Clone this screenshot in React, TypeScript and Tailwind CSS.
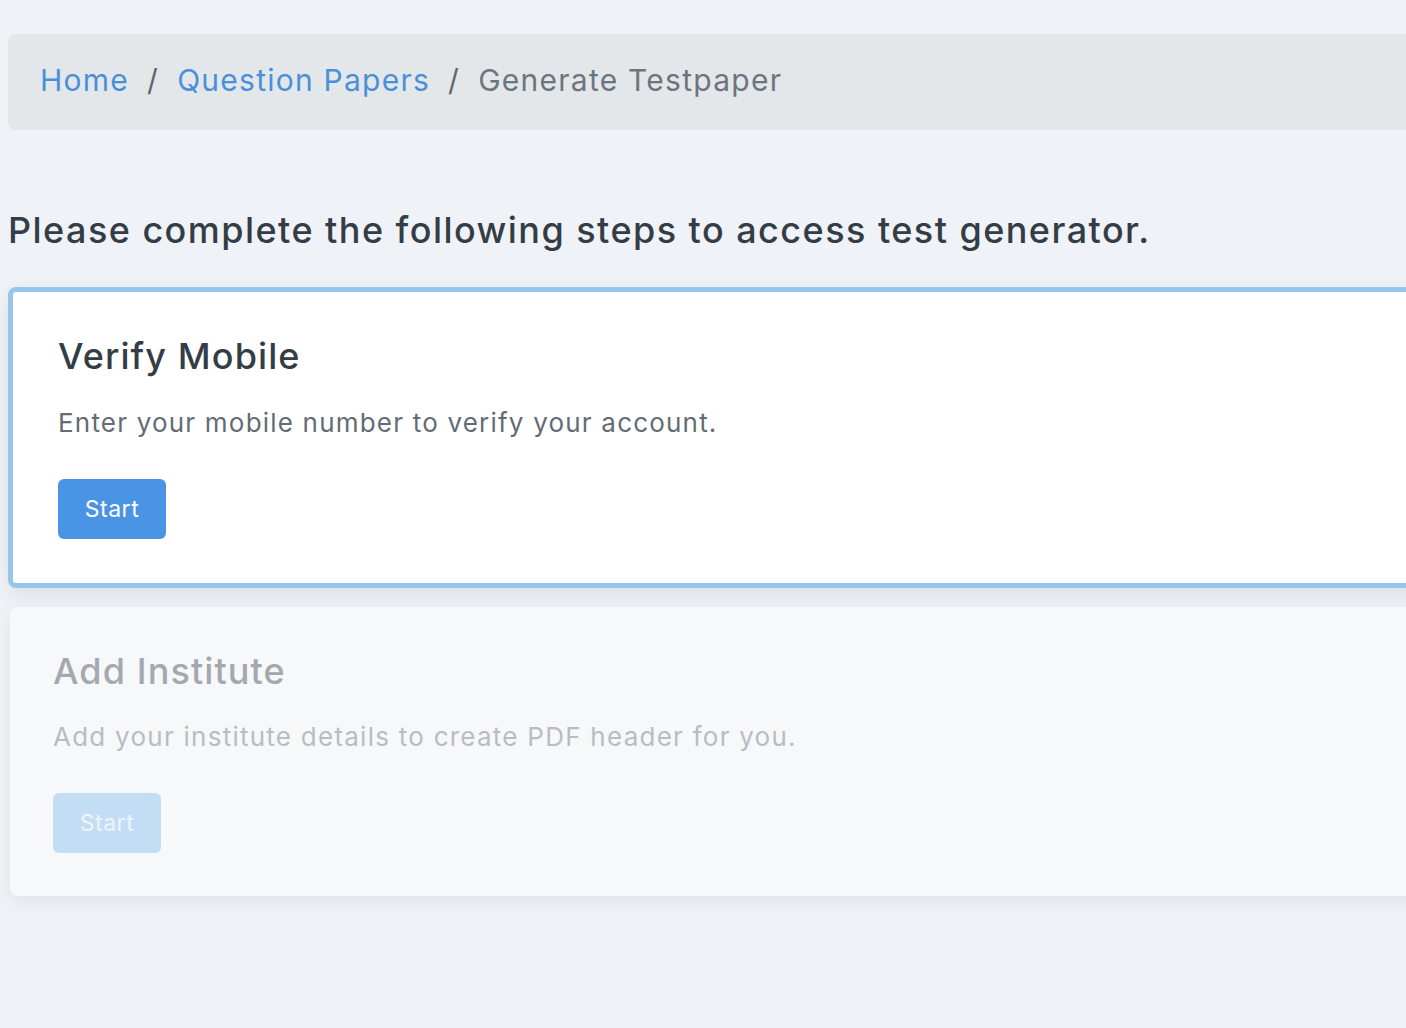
import React from 'react';

const font = { fontFamily: 'Inter, "Noto Sans", sans-serif' };

type StepProps = {
  title: string;
  text: string;
  active?: boolean;
};

const StepCard = ({ title, text, active }: StepProps) => {
  if (active) {
    return (
      <div className="ml-[8px] rounded-[8px] border-[5px] border-[#95c6ec] bg-white pl-[45px] pt-[42px] pb-[44px] shadow-[0_6px_18px_rgba(60,72,88,0.10)]">
        <h2 className="text-[36px] leading-[44px] font-medium tracking-[1.1px] text-[#343d46]">{title}</h2>
        <p className="mt-[27px] text-[26px] leading-[36px] tracking-[1.2px] text-[#636c74]">{text}</p>
        <button className="mt-[38px] h-[60px] w-[108px] rounded-[6px] bg-[#4a94e6] text-[23px] tracking-[0.5px] text-white">
          Start
        </button>
      </div>
    );
  }
  return (
    <div className="ml-[10px] rounded-[8px] bg-[#f6f8fa] pl-[43px] pt-[42px] pb-[43px] shadow-[0_6px_18px_rgba(60,72,88,0.08)]">
      <h2 className="text-[36px] leading-[44px] font-medium tracking-[1.1px] text-[#a3a9ae]">{title}</h2>
      <p className="mt-[26px] text-[26px] leading-[36px] tracking-[1.25px] text-[#b8bdc2]">{text}</p>
      <button className="mt-[38px] h-[60px] w-[108px] rounded-[6px] bg-[#c3ddf5] text-[23px] tracking-[0.5px] text-[#eef5fc]">
        Start
      </button>
    </div>
  );
};

export default function App() {
  return (
    <div className="h-[1028px] w-full overflow-hidden bg-[#eff2f6]" style={font}>
      <div className="w-[1460px] pt-[34px]">
        <nav className="ml-[8px] flex h-[96px] items-center rounded-[8px] bg-[#e3e7ea] pb-[4px] pl-[32px] text-[30px] tracking-[1.25px]">
          <a className="text-[#4a90d9]">Home</a>
          <span className="mx-[18px] text-[#5f666d]">/</span>
          <a className="text-[#4a90d9]">Question Papers</a>
          <span className="mx-[18px] text-[#5f666d]">/</span>
          <span className="text-[#6c757d]">Generate Testpaper</span>
        </nav>

        <h1 className="mt-[78px] ml-[8px] text-[36px] leading-[44px] font-medium tracking-[1.45px] text-[#343d46]">
          Please complete the following steps to access test generator.
        </h1>

        <div className="mt-[35px] flex flex-col gap-[19px]">
          <StepCard title="Verify Mobile" text="Enter your mobile number to verify your account." active />
          <StepCard title="Add Institute" text="Add your institute details to create PDF header for you." />
        </div>
      </div>
    </div>
  );
}
